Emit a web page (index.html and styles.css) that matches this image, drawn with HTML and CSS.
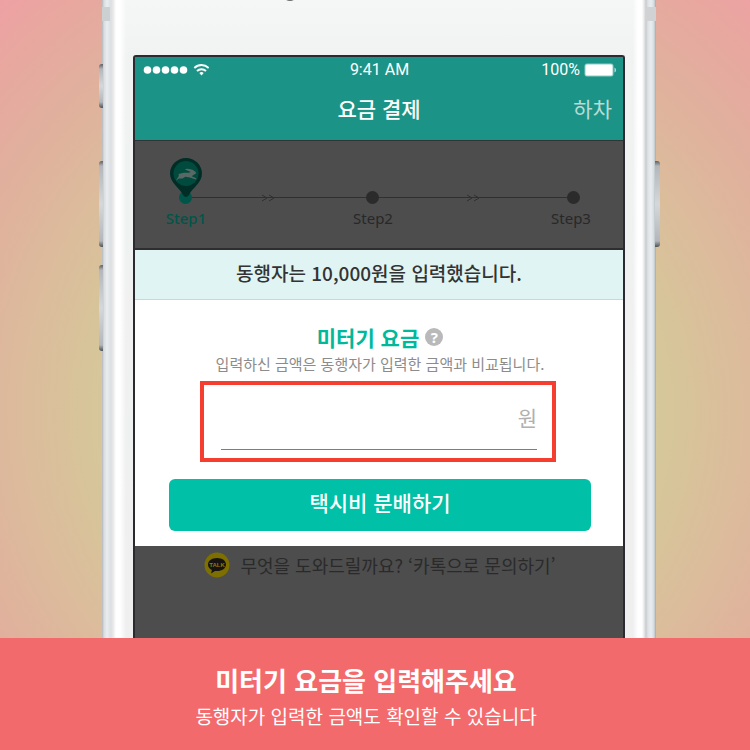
FILE: index.html
```html
<!DOCTYPE html>
<html lang="ko">
<head>
<meta charset="utf-8">
<meta name="viewport" content="width=device-width, initial-scale=1">
<title>요금 결제</title>
<link rel="stylesheet" href="styles.css">
</head>
<body>
<main class="scene">
  <div class="phone">
    <span class="antenna"></span>
    <span class="speaker"></span>
    <span class="key key-mute"></span>
    <span class="key key-up"></span>
    <span class="key key-down"></span>
    <span class="key key-power"></span>
    <div class="screen">
      <header class="top">
        <div class="status">
          <svg class="signal" viewBox="0 0 66 14" aria-hidden="true">
            <g fill="#fff"><circle cx="4.500" cy="7" r="3.800"/><circle cx="13.500" cy="7" r="3.800"/><circle cx="22.500" cy="7" r="3.800"/><circle cx="31.500" cy="7" r="3.800"/><circle cx="40.500" cy="7" r="3.800"/><path d="M58.500 12.500 56.300 10.100a3.200 3.200 0 0 1 4.400 0z"/></g>
            <g fill="none" stroke="#fff" stroke-width="1.900"><path d="M51.300 5a10.300 10.300 0 0 1 14.400 0"/><path d="M54 8a6.500 6.500 0 0 1 9 0"/></g>
          </svg>
          <span class="clock">9:41 AM</span>
          <span class="battery">100%
            <svg class="cell" viewBox="0 0 32 14" aria-hidden="true"><rect x="0.500" y="0.500" width="29" height="13" rx="2.500" fill="#8ecbc4"/><rect x="1.500" y="1.500" width="27" height="11" rx="1.500" fill="#fff"/><path d="M30.500 4.500q1.500.5 1.500 2.500t-1.500 2.500z" fill="#b9dfdb"/></svg>
          </span>
        </div>
        <div class="nav">
          <h1 class="title">요금 결제</h1>
          <button class="leave" type="button">하차</button>
        </div>
      </header>

      <section class="steps">
        <div class="track">
          <span class="dot dot-on">
            <svg class="pin" viewBox="0 0 32 40" aria-hidden="true">
              <path d="M16 0C7.200 0 0 6.900 0 15.500 0 25 9.500 29.500 13 37q3 4 6 0C22.500 29.500 32 25 32 15.500 32 6.900 24.800 0 16 0z" fill="#002e27"/>
              <circle cx="16" cy="15.500" r="12.500" fill="#004a3e"/>
              <path d="M5.800 22.800 8.800 18 8.600 16 13.500 14.800 18.500 14.800 20.800 13.900 15 11.600Q15.500 10 22.500 11.700L25.800 14 25.900 15.600 23 17.200 21.800 18.200 26.500 20.500 26 21.400 19.800 19.600 15.300 18.700 12.500 20.600 9 20.500z" fill="#586864"/>
            </svg>
          </span>
          <span class="link"><svg class="arrows arrows-first" viewBox="0 0 14 8" aria-hidden="true"><path d="M1 1l5 3-5 3M8 1l5 3-5 3"/></svg></span>
          <span class="dot"></span>
          <span class="link"><svg class="arrows" viewBox="0 0 14 8" aria-hidden="true"><path d="M1 1l5 3-5 3M8 1l5 3-5 3"/></svg></span>
          <span class="dot"></span>
        </div>
        <ol class="labels">
          <li class="current" aria-current="step">Step1</li>
          <li>Step2</li>
          <li>Step3</li>
        </ol>
      </section>

      <p class="notice">동행자는 10,000원을 입력했습니다.</p>

      <form class="fare">
        <div class="fare-head">
          <label class="fare-label" for="fare">미터기 요금</label>
          <button class="info" type="button" aria-label="도움말">?</button>
        </div>
        <p class="hint">입력하신 금액은 동행자가 입력한 금액과 비교됩니다.</p>
        <div class="highlight">
          <div class="field">
            <input class="amount" id="fare" type="text" inputmode="numeric">
            <span class="unit">원</span>
          </div>
        </div>
        <button class="submit" type="button">택시비 분배하기</button>
      </form>

      <footer class="help">
        <a class="help-link" href="#">
          <svg class="talk" viewBox="0 0 26 26" aria-hidden="true">
            <circle cx="13" cy="13" r="12.500" fill="#7d7000"/>
            <path d="M13 6C7.800 6 4 8.900 4 12.500c0 2.400 1.500 4.300 3.900 5.500L7 21.500 11 19q1 .1 2 .1c5.200 0 9-2.900 9-6.600S18.200 6 13 6z" fill="#171313"/>
            <text x="13" y="15" text-anchor="middle" class="talk-text">TALK</text>
          </svg>
          <span>무엇을 도와드릴까요? ‘카톡으로 문의하기’</span>
        </a>
      </footer>
    </div>
  </div>
</main>
<section class="caption">
  <h2 class="caption-title">미터기 요금을 입력해주세요</h2>
  <p class="caption-text">동행자가 입력한 금액도 확인할 수 있습니다</p>
</section>
</body>
</html>
```
FILE: styles.css
```css
* { box-sizing: border-box; margin: 0; padding: 0; }

body {
  min-height: 100vh;
  display: flex;
  flex-direction: column;
  font-family: "Noto Sans CJK KR", "Noto Sans", sans-serif;
  background: radial-gradient(circle farthest-corner at 51% 55%, #d3cc98 0, #d4ca99 46%, #dabf9b 60%, #e0b19d 77%, #e7a89f 90%, #eea1a3 100%);
}

button, input { font: inherit; border: 0; background: none; }
svg { display: block; }

.scene { flex: 1; display: flex; padding: 0 94px 0 102px; }

.phone {
  flex: 1;
  position: relative;
  display: flex;
  padding: 55px 31px 0;
  background:
    linear-gradient(90deg, #b3b7bb 0, #d9dddf 2px, #e9edef 5px, #dcdfe1 9px, #e8e8e8 11px, #fff 14px, #fff 18px, rgba(255, 255, 255, 0) 24px),
    linear-gradient(270deg, #9fa6ab 0, #d4dadd 2px, #e9edf1 5px, #dfe3e6 8px, #c9cccd 10px, #e8e8e8 12px, #fff 14px, #fff 18px, rgba(255, 255, 255, 0) 23px),
    linear-gradient(180deg, #f5f7f6 0, #f1f2f2 60px, #efefef 100%);
}

.antenna {
  position: absolute;
  top: 7px;
  left: 0;
  right: 0;
  height: 14px;
  background: linear-gradient(90deg, #cdd0d0 8px, transparent 8px calc(100% - 10px), #d0d2d3 calc(100% - 10px));
}

.speaker {
  position: absolute;
  top: -12px;
  left: 181px;
  width: 14px;
  height: 13px;
  border-radius: 50%;
  background: #6b6b6b;
}

.key {
  position: absolute;
  left: -3px;
  width: 4px;
  height: 86px;
  border-radius: 3px 0 0 3px;
  background: linear-gradient(180deg, #5b6066 0, #b3b7bb 5px, #d5d8da 50%, #b3b7bb calc(100% - 6px), #4d5258 100%);
}
.key-mute { top: 52px; height: 37px; }
.key-up { top: 161px; }
.key-down { top: 265px; }
.key-mute { top: 64px; height: 44px; }
.key-power { top: 161px; left: auto; right: -4px; width: 5px; border-radius: 0 3px 3px 0; }

.screen {
  flex: 1;
  display: flex;
  flex-direction: column;
  border: 2px solid #2b2a30;
  border-bottom: 0;
  border-radius: 3px 3px 0 0;
  background: #4d4d4d;
}

.top { background: #1b9487; color: #fff; }

.status {
  display: grid;
  grid-template-columns: 1fr auto 1fr;
  align-items: center;
  height: 26px;
  padding: 0 7px 0 8px;
  font: 16px/20px Roboto, Inter, sans-serif;
}
.signal { width: 66px; height: 14px; }
.battery { display: flex; justify-content: flex-end; align-items: center; gap: 4px; }
.cell { width: 32px; height: 14px; }

.nav {
  display: grid;
  grid-template-columns: 1fr auto 1fr;
  align-items: center;
  height: 57px;
  padding: 0 11px 8px;
  font-size: 21px;
  line-height: 30px;
}
.title { grid-column: 2; font-size: 21px; font-weight: 500; }
.leave { justify-self: end; color: #b5dcd7; }

.steps {
  height: 110px;
  padding-top: 50px;
  border-top: 1px solid #2f3436;
  border-bottom: 2px solid #2e2e2e;
}
.track {
  display: grid;
  grid-template-columns: 13px 174fr 13px 188fr 13px;
  align-items: center;
  padding: 0 43px 0 44px;
}
.dot { position: relative; height: 13px; border-radius: 50%; background: #2b2b2b; }
.dot-on { background: #005548; }
.pin { position: absolute; left: -9px; bottom: 6px; width: 32px; height: 40px; }
.link {
  display: flex;
  justify-content: center;
  background: linear-gradient(#303030, #303030) center / 100% 1px no-repeat;
}
.arrows { width: 14px; height: 8px; fill: none; stroke: #303030; stroke-width: 1; }
.arrows-first { margin-right: 22px; }
.labels {
  display: grid;
  grid-template-columns: 102fr 272fr 114fr;
  padding-top: 3px;
  list-style: none;
  font: 15px/22px "Noto Sans", sans-serif;
  text-align: center;
  color: #282828;
}
.labels li:last-child { padding-left: 10px; }
.current { color: #005548; font-weight: 500; }

.notice {
  height: 50px;
  border-bottom: 1px solid #c9d8d7;
  background: #e0f5f3;
  color: #333;
  font-size: 19px;
  font-weight: 500;
  line-height: 46px;
  text-align: center;
}

.fare {
  display: flex;
  flex-direction: column;
  padding: 21px 32px 15px 34px;
  background: #fff;
}
.fare-head { display: flex; justify-content: center; align-items: center; gap: 6px; }
.fare-label { color: #00b99b; font-size: 21px; font-weight: 700; line-height: 32px; }
.info {
  width: 18px;
  height: 18px;
  border-radius: 50%;
  background: #b9b9b9;
  color: #fff;
  font: 700 15px/18px "Noto Sans", sans-serif;
}
.hint { color: #8c8c8c; font-size: 15px; line-height: 22px; text-align: center; }
.highlight { margin: 6px 35px 0 31px; padding: 15px 15px 8px 17px; border: 4px solid #f63e30; }
.field { display: flex; align-items: flex-start; height: 50px; border-bottom: 1px solid #7d7d7d; }
.amount { flex: 1; min-width: 0; height: 40px; color: #333; font-size: 21px; outline: 0; }
.unit { color: #b0b0b0; font-size: 21px; line-height: 34px; }
.submit {
  height: 52px;
  margin-top: 17px;
  padding-bottom: 6px;
  border-radius: 6px;
  background: #00c1a8;
  color: #fff;
  font-size: 21px;
  font-weight: 500;
}

.help { min-height: 92px; padding-top: 5px; color: #2a2a2a; }
.help-link {
  display: flex;
  justify-content: center;
  align-items: center;
  gap: 10px;
  padding-left: 2px;
  color: inherit;
  font-size: 18px;
  line-height: 28px;
  text-decoration: none;
}
.talk { width: 26px; height: 26px; }
.talk-text { font: 700 6px "Liberation Sans", sans-serif; fill: #8a7c00; }

.caption {
  padding: 24px 18px 16px 0;
  background: #f36a6c;
  color: #fff;
  text-align: center;
}
.caption-title { font-size: 26px; font-weight: 700; line-height: 36px; }
.caption-text { font-size: 19px; line-height: 36px; }
```
